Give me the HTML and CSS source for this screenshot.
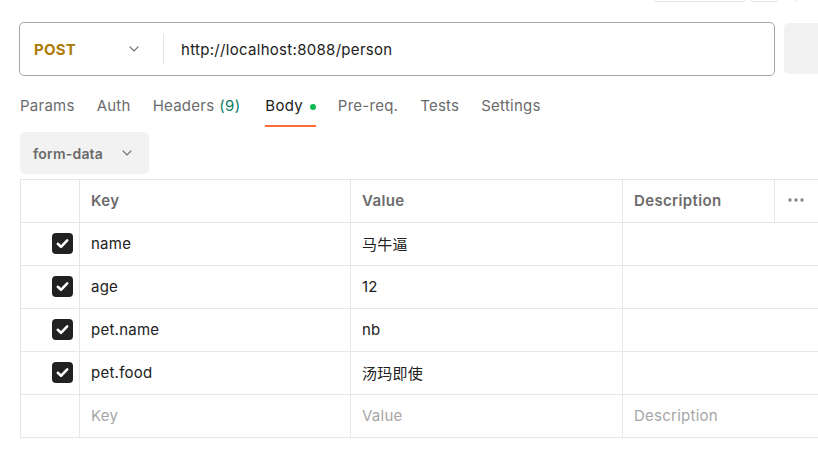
FILE: index.html
```html
<!DOCTYPE html>
<html lang="en">
<head>
<meta charset="utf-8">
<title>Request</title>
<link rel="stylesheet" href="styles.css">
</head>
<body>
<div class="topstrip">
  <div class="tbtn tbtn-wide"></div>
  <div class="tbtn tbtn-sq"></div>
  <div class="tsep"></div>
  <div class="tround"></div>
</div>

<div class="request">
  <div class="urlbox">
    <div class="method">
      <span class="method-name">POST</span>
      <svg class="chev" width="10" height="6" viewBox="0 0 10 6"><path d="M0.7 0.7 L5 5 L9.3 0.7" fill="none" stroke="#6b6b6b" stroke-width="1.2"/></svg>
    </div>
    <div class="divider"></div>
    <div class="url">http://localhost:8088/person</div>
  </div>
  <div class="send"></div>
</div>

<div class="tabs">
  <div class="tab">Params</div>
  <div class="tab">Auth</div>
  <div class="tab tab-headers">Headers<span class="count">(9)</span></div>
  <div class="tab active">Body<span class="dot"></span></div>
  <div class="tab">Pre-req.</div>
  <div class="tab">Tests</div>
  <div class="tab">Settings</div>
</div>

<div class="bodytype">
  <span>form-data</span>
  <svg class="chev" width="10" height="6" viewBox="0 0 10 6"><path d="M0.7 0.7 L5 5 L9.3 0.7" fill="none" stroke="#6b6b6b" stroke-width="1.2"/></svg>
</div>

<div class="kv">
  <div class="row head">
    <div class="cell"></div>
    <div class="cell">Key</div>
    <div class="cell">Value</div>
    <div class="cell">Description</div>
    <div class="cell more"><svg width="16" height="4" viewBox="0 0 16 4"><circle cx="2" cy="2" r="1.7" fill="#8a8a8a"/><circle cx="8" cy="2" r="1.7" fill="#8a8a8a"/><circle cx="14" cy="2" r="1.7" fill="#8a8a8a"/></svg></div>
  </div>
  <div class="row">
    <div class="cell check"><span class="box"><svg width="21" height="21" viewBox="0 0 21 21"><path d="M5.8 10.8 L9 13.8 L15.2 7.4" fill="none" stroke="#fff" stroke-width="2.6" stroke-linecap="round" stroke-linejoin="round"/></svg></span></div>
    <div class="cell">name</div>
    <div class="cell">马牛逼</div>
    <div class="cell desc"></div>
  </div>
  <div class="row">
    <div class="cell check"><span class="box"><svg width="21" height="21" viewBox="0 0 21 21"><path d="M5.8 10.8 L9 13.8 L15.2 7.4" fill="none" stroke="#fff" stroke-width="2.6" stroke-linecap="round" stroke-linejoin="round"/></svg></span></div>
    <div class="cell">age</div>
    <div class="cell">12</div>
    <div class="cell desc"></div>
  </div>
  <div class="row">
    <div class="cell check"><span class="box"><svg width="21" height="21" viewBox="0 0 21 21"><path d="M5.8 10.8 L9 13.8 L15.2 7.4" fill="none" stroke="#fff" stroke-width="2.6" stroke-linecap="round" stroke-linejoin="round"/></svg></span></div>
    <div class="cell">pet.name</div>
    <div class="cell">nb</div>
    <div class="cell desc"></div>
  </div>
  <div class="row">
    <div class="cell check"><span class="box"><svg width="21" height="21" viewBox="0 0 21 21"><path d="M5.8 10.8 L9 13.8 L15.2 7.4" fill="none" stroke="#fff" stroke-width="2.6" stroke-linecap="round" stroke-linejoin="round"/></svg></span></div>
    <div class="cell">pet.food</div>
    <div class="cell">汤玛即使</div>
    <div class="cell desc"></div>
  </div>
  <div class="row placeholder">
    <div class="cell"></div>
    <div class="cell">Key</div>
    <div class="cell">Value</div>
    <div class="cell desc">Description</div>
  </div>
</div>
</body>
</html>
```

FILE: styles.css
```css
* { box-sizing: border-box; }

html, body {
  margin: 0;
  padding: 0;
  background: #fff;
  overflow: hidden;
}

body {
  font-family: Inter, "Noto Sans CJK SC", sans-serif;
  font-size: 15px;
  letter-spacing: 0.25px;
  color: #212121;
  width: 818px;
  height: 454px;
}

.topstrip {
  height: 2px;
  overflow: hidden;
  display: flex;
  align-items: flex-end;
  padding-left: 653px;
}

.tbtn {
  height: 30px;
  border: 1px solid #e3e3e3;
  border-radius: 5px;
  flex: none;
}

.tbtn-wide { width: 94px; }
.tbtn-sq { width: 30px; margin-left: 2px; }

.tsep {
  width: 1px;
  height: 30px;
  background: #e3e3e3;
  margin-left: 17px;
  flex: none;
}

.tround {
  width: 24px;
  height: 30px;
  border: 1px solid #d6d6d6;
  border-radius: 12px;
  margin-left: 17px;
  flex: none;
}

.request {
  display: flex;
  align-items: flex-start;
  gap: 9px;
  margin-top: 20px;
  padding-left: 19px;
}

.urlbox {
  width: 756px;
  height: 54px;
  border: 1px solid #a6a6a6;
  border-radius: 5px;
  display: flex;
  align-items: center;
  flex: none;
}

.method {
  width: 143px;
  display: flex;
  align-items: center;
  padding-left: 14px;
}

.method-name {
  font-weight: 700;
  color: #ad7a03;
  width: 95px;
}

.divider {
  width: 1px;
  height: 30px;
  background: #e6e6e6;
}

.url {
  padding-left: 17px;
  color: #212121;
  letter-spacing: 0.3px;
}

.send {
  width: 60px;
  height: 51px;
  margin-top: 1px;
  background: #f2f2f2;
  border-radius: 5px;
  flex: none;
}

.tabs {
  display: flex;
  gap: 22px;
  margin-top: 15px;
  padding-left: 20px;
}

.tab {
  height: 36px;
  line-height: 30px;
  padding-bottom: 4px;
  border-bottom: 2px solid transparent;
  color: #6b6b6b;
  display: flex;
  align-items: center;
  white-space: nowrap;
}

.tab-headers {
  padding-right: 3px;
}

.tab .count {
  color: #0f7b64;
  margin-left: 5px;
}

.tab.active {
  color: #212121;
  border-bottom-color: #ff6c37;
}

.dot {
  width: 6px;
  height: 6px;
  border-radius: 50%;
  background: #0cbb52;
  margin-left: 7px;
  margin-top: 2px;
}

.bodytype {
  margin: 5px 0 0 20px;
  width: 129px;
  height: 42px;
  background: #f2f2f2;
  border-radius: 5px;
  display: flex;
  align-items: center;
  gap: 19px;
  padding-left: 13px;
  font-weight: 600;
  color: #6b6b6b;
  font-size: 14px;
  letter-spacing: 0.2px;
}

.kv {
  margin: 5px 0 0 20px;
  width: 840px;
  border-top: 1px solid #e6e6e6;
  border-left: 1px solid #e6e6e6;
}

.row {
  display: grid;
  grid-template-columns: 59px 271px 272px 152px 1fr;
  height: 43px;
  border-bottom: 1px solid #e6e6e6;
}

.cell {
  border-right: 1px solid #e6e6e6;
  display: flex;
  align-items: center;
  padding-left: 11px;
  white-space: nowrap;
  padding-bottom: 1px;
}

.cell.desc {
  grid-column: span 2;
  border-right: none;
}

.head .cell {
  font-weight: 600;
  color: #6b6b6b;
  letter-spacing: 0.35px;
  padding-bottom: 2px;
}

.head .cell.more {
  border-right: none;
  padding-left: 13px;
}

.cell.check {
  justify-content: flex-end;
  padding-left: 0;
  padding-right: 6px;
}

.box {
  width: 21px;
  height: 21px;
  border-radius: 4px;
  background: #212121;
  display: block;
}

.box svg { display: block; }

.placeholder .cell {
  color: #a6a6a6;
}
```
